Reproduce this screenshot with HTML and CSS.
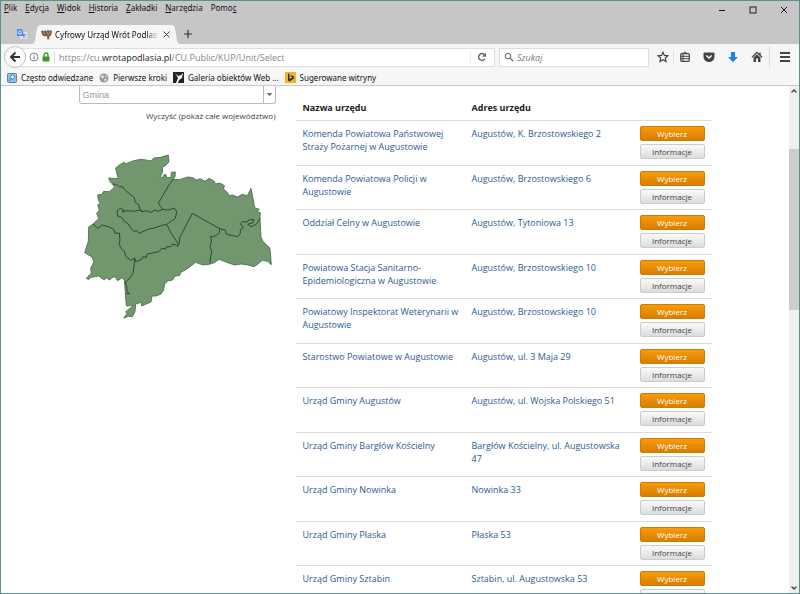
FILE: index.html
```html
<!DOCTYPE html>
<html lang="pl">
<head>
  <meta charset="UTF-8">
  <meta name="viewport" content="width=device-width, initial-scale=1.0">
  <title>Cyfrowy Urząd Wrót Podlasia</title>
  <link rel="stylesheet" href="styles.css">
</head>
<body>
  <div class="window">

    <!-- Title bar -->
    <header class="titlebar">
      <div class="top-row">
        <nav class="menu">
          <button><u>P</u>lik</button>
          <button><u>E</u>dycja</button>
          <button><u>W</u>idok</button>
          <button><u>H</u>istoria</button>
          <button><u>Z</u>akładki</button>
          <button><u>N</u>arzędzia</button>
          <button>Pomo<u>c</u></button>
        </nav>
        <div class="window-controls">
          <button aria-label="Minimalizuj"><svg width="8" height="8" viewBox="0 0 8 8"><path d="M1 4.5h6" stroke="#111" fill="none"/></svg></button>
          <button aria-label="Maksymalizuj"><svg width="8" height="8" viewBox="0 0 8 8"><rect x="1" y="1" width="6" height="6" stroke="#111" fill="none" stroke-width=".9"/></svg></button>
          <button aria-label="Zamknij"><svg width="8" height="8" viewBox="0 0 8 8"><path d="M1 1l6 6M7 1l-6 6" stroke="#111" fill="none"/></svg></button>
        </div>
      </div>
      <div class="tabs">
        <button class="pinned" aria-label="Tłumacz">
          <svg width="12" height="12" viewBox="0 0 12 12"><rect x="4" y="4" width="7" height="7" rx="1" fill="#dfe3ea"/><path d="M6 6.5h4M8 5.5v1M9.5 6.5q-1 2.5-3 3.2M7 7.5l2.5 2.2" stroke="#6c86b5" fill="none" stroke-width=".8"/><path d="M1 1h5l2 7H1z" fill="#4a86e8"/><path d="M5.5 3.7A1.7 1.7 0 1 0 5.6 5.2H4.2" stroke="#fff" fill="none" stroke-width=".9"/></svg>
        </button>
        <div class="tab">
          <svg width="10" height="19" viewBox="0 0 10 19"><path d="M0 19C4 19 4 16 5 9C6 2 7 0 10 0V19z" fill="#f6f6f6"/></svg>
          <div class="tab-body">
            <svg width="11" height="11" viewBox="0 0 11 11"><path d="M0 2l2-.5 1 1L4.500 1l1 1.500L7 .5l1 1.500L10 1l1 1.500-1 4-1.500 1L8 10.500H6.500L6 7.500 4.500 7 3 7.500 1 5.500z" fill="#7d6047"/><path d="M2 4l2 1M6 3l1 2M9 3L7 6" stroke="#b49a7c" stroke-width=".7"/></svg>
            <span class="tab-title">Cyfrowy Urząd Wrót Podlasi</span>
            <button aria-label="Zamknij kartę"><svg width="9" height="9" viewBox="0 0 9 9"><path d="M1.5 1.5l6 6M7.5 1.5l-6 6" stroke="#444" fill="none"/></svg></button>
          </div>
          <svg width="10" height="19" viewBox="0 0 10 19"><path d="M10 19C6 19 6 16 5 9C4 2 3 0 0 0V19z" fill="#f6f6f6"/></svg>
        </div>
        <button class="new-tab" aria-label="Nowa karta"><svg width="10" height="10" viewBox="0 0 10 10"><path d="M5 1v8M1 5h8" stroke="#333" stroke-width="1.2"/></svg></button>
      </div>
    </header>

    <!-- Address bar -->
    <div class="toolbar">
      <button class="back" aria-label="Wstecz"><svg width="12" height="12" viewBox="0 0 12 12"><path d="M6.5 1.500L2 6l4.5 4.500M2.5 6H11" stroke="#333" stroke-width="2" fill="none"/></svg></button>
      <div class="urlbar">
        <svg width="10" height="10" viewBox="0 0 10 10"><circle cx="5" cy="5" r="4" stroke="#777" fill="none" stroke-width=".9"/><path d="M5 4.3v3M5 2.5v1" stroke="#666"/></svg>
        <svg class="lock" width="8" height="10" viewBox="0 0 8 10"><path d="M2 5V3a2 2 0 0 1 4 0v2" stroke="#3c9a1c" stroke-width="1.3" fill="none"/><rect x=".5" y="4.5" width="7" height="5" rx=".8" fill="#3c9a1c"/></svg>
        <div class="url">https://cu.<b>wrotapodlasia.pl</b>/CU.Public/KUP/Unit/Select</div>
        <button class="reload" aria-label="Odśwież"><svg width="10" height="10" viewBox="0 0 10 10"><path d="M8 6.5A3.4 3.4 0 1 1 7.5 2.7" stroke="#666" stroke-width="1.4" fill="none"/><path d="M9 .8v4H5z" fill="#666"/></svg></button>
      </div>
      <label class="search">
        <svg width="10" height="10" viewBox="0 0 10 10"><circle cx="4" cy="4" r="2.7" stroke="#777" stroke-width="1.2" fill="none"/><path d="M6 6l3.2 3.2" stroke="#777" stroke-width="1.5"/></svg>
        <input type="search" placeholder="Szukaj" aria-label="Szukaj">
      </label>
      <div class="tools">
        <button aria-label="Dodaj zakładkę"><svg width="12" height="12" viewBox="0 0 12 12"><path d="M6 1.3l1.4 3.1 3.4.4-2.5 2.3.7 3.4-3-1.7-3 1.7.7-3.4L1.2 4.8l3.400-.4z" stroke="#444" stroke-width="1.2" fill="none"/></svg></button>
        <button class="split" aria-label="Zakładki"><svg width="12" height="12" viewBox="0 0 12 12"><rect x="1.7" y="2.7" width="8.6" height="7.6" rx="1" stroke="#444" stroke-width="1.2" fill="none"/><path d="M4 2.5L6 .8l2 1.7M2 5.3h8M2 7.7h8M4 3v7" stroke="#444" fill="none"/></svg></button>
        <button aria-label="Pocket"><svg width="12" height="12" viewBox="0 0 12 12"><path d="M1.5 1.5h9q1 0 1 1V5.5a5.500 5.500 0 0 1-11 0V2.500q0-1 1-1z" fill="#444"/><path d="M3.3 4.5L6 7.1l2.7-2.6" stroke="#fff" stroke-width="1.4" fill="none"/></svg></button>
        <button aria-label="Pobrane"><svg width="12" height="12" viewBox="0 0 12 12"><path d="M4 1h4v5h3L6 11 1 6h3z" fill="#1a7fe6"/></svg></button>
        <button aria-label="Strona startowa"><svg width="12" height="12" viewBox="0 0 12 12"><path d="M1 6.2L6 1.3l5 4.9M9 1.5v2.5" stroke="#444" stroke-width="1.3" fill="none"/><path d="M2.5 6.5L6 3.2l3.5 3.300V11H7V7.500H5V11H2.500z" fill="#444"/></svg></button>
        <button class="hamburger" aria-label="Menu"><svg width="12" height="12" viewBox="0 0 12 12"><path d="M1 2h10M1 6h10M1 10h10" stroke="#444" stroke-width="1.8"/></svg></button>
      </div>
    </div>

    <!-- Bookmarks -->
    <nav class="bookmarks">
      <a href="#"><svg width="10" height="10" viewBox="0 0 10 10"><rect x=".5" y=".5" width="9" height="9" rx="1" fill="#8fc0df" stroke="#4f87b0"/><circle cx="5.5" cy="4" r="2" fill="#eaf5fc" stroke="#39719b" stroke-width=".8"/><path d="M4 5.5L2 8" stroke="#39719b"/></svg>Często odwiedzane</a>
      <a href="#"><svg width="10" height="10" viewBox="0 0 10 10"><circle cx="5" cy="5" r="4.5" fill="#999"/><path d="M2 3l2-1 1 2-2 2zM6 2l2 1-1 2zM5 6l3 0-2 3z" fill="#e6e6e6"/></svg>Pierwsze kroki</a>
      <a href="#"><svg width="11" height="11" viewBox="0 0 11 11"><rect width="11" height="11" fill="#222"/><path d="M2 1l3 3 3-1 2-2-1 5-3 2-1 3H3l2-5z" fill="#f4f4f4"/></svg>Galeria obiektów Web ...</a>
      <a href="#"><svg width="11" height="11" viewBox="0 0 11 11"><rect width="11" height="11" fill="#f2b71c"/><path d="M3 1.5l1.5.6v5l3-1.7-1.5-.8-.6-1.6L9 4.5v2L4.5 9.5 3 8.5z" fill="#33302a"/></svg>Sugerowane witryny</a>
    </nav>

    <!-- Page -->
    <div class="viewport">
      <main class="page">
        <aside class="filters">
          <select aria-label="Gmina">
            <option>Gmina</option>
          </select>
          <a class="clear" href="#">Wyczyść (pokaż całe województwo)</a>
          <svg class="map" width="190" height="168" viewBox="36 216 570 504" role="img" aria-label="Mapa województwa">
            <g fill="#72976f" stroke="#4c684b" stroke-width="2.5" stroke-linejoin="round">
              <path d="M134 264L146 254 160 247 163 252 185 243 208 238 226 240 240 243 248 234 268 232 292 225 294 246 282 258 274 262 275 276 268 290 276 293 279 284 285 284 287 293 300 293 301 277 313 276 312 291 306 298 325 299 350 291 366 293 376 300 388 296 402 304 414 295 430 304 433 312 447 309 460 317 458 328 469 337 475 347 485 345 500 351 513 343 529 347 540 325 546 355 551 383 565 388 558 394 568 398 567 415 570 470 575 483 597 505 601 554 590 544 574 541 562 551 549 560 530 555 512 552 490 555 470 548 444 538 430 548 415 553 395 555 374 547 357 560 344 569 330 577 325 587 312 588 305 600 290 603 281 612 278 630 270 642 255 648 243 648 240 666 212 678 211 667 194 672 192 695 184 710 172 709 158 714 168 701 164 695 188 676 166 678 160 602 154 593 140 602 132 590 122 593 117 600 105 593 100 600 83 588 60 592 54 598 46 596 50 590 61 580 59 564 69 546 63 531 41 518 52 484 53 441 66 432 83 416 77 400 85 390 80 375 88 370 82 361 80 345 92 343 98 334 115 335 130 322 126 310 118 307 113 294 142 296 137 279z"/>
              <path fill="none" stroke="#203a22" d="M122 312L135 313 145 320 154 320 164 332 178 343 190 353 192 366 204 376 206 386 215 395M306 298L298 310 292 318 262 370 268 379 275 388M138 393L148 385 158 390 154 396 168 392 190 394 204 390 215 395 226 392 240 397 252 390 262 394 275 388 290 390 310 385 317 395 313 415 300 424 287 433 270 437 250 444 230 448 205 460 196 452 188 454 180 445 172 432 160 424 152 412 140 408zM287 433L300 459 322 492 320 500M66 432L80 445 94 435 115 441 130 450 132 460 145 459 147 480 144 492 151 506 160 515 165 530 180 541 191 534 194 545 212 538 216 530 226 532 228 522 240 520 264 515 272 505 284 507 287 500 300 500 305 492 320 497 325 490 326 473 364 400 446 446 445 459 432 468 418 470 422 480 417 500 422 515 416 550M446 446L463 450 466 462 480 466 500 470 508 460 508 449 517 443 508 431 514 425 528 426 535 419 548 419 546 428 530 433 540 440 556 433 567 415M191 534L189 560 186 580 174 597 163 606 167 618 169 635 175 641 164 641"/>
            </g>
          </svg>
        </aside>

        <table class="offices">
          <thead>
            <tr><th class="name">Nazwa urzędu</th><th>Adres urzędu</th><th class="actions" aria-label="Akcje"></th></tr>
          </thead>
          <tbody>
            <tr><td><a href="#">Komenda Powiatowa Państwowej Straży Pożarnej w Augustowie</a></td><td><a href="#">Augustów, K. Brzostowskiego 2</a></td><td class="actions"><button class="btn primary">Wybierz</button><button class="btn">Informacje</button></td></tr>
            <tr><td><a href="#">Komenda Powiatowa Policji w Augustowie</a></td><td><a href="#">Augustów, Brzostowskiego 6</a></td><td class="actions"><button class="btn primary">Wybierz</button><button class="btn">Informacje</button></td></tr>
            <tr><td><a href="#">Oddział Celny w Augustowie</a></td><td><a href="#">Augustów, Tytoniowa 13</a></td><td class="actions"><button class="btn primary">Wybierz</button><button class="btn">Informacje</button></td></tr>
            <tr><td><a href="#">Powiatowa Stacja Sanitarno-Epidemiologiczna w Augustowie</a></td><td><a href="#">Augustów, Brzostowskiego 10</a></td><td class="actions"><button class="btn primary">Wybierz</button><button class="btn">Informacje</button></td></tr>
            <tr><td><a href="#">Powiatowy Inspektorat Weterynarii w Augustowie</a></td><td><a href="#">Augustów, Brzostowskiego 10</a></td><td class="actions"><button class="btn primary">Wybierz</button><button class="btn">Informacje</button></td></tr>
            <tr><td><a href="#">Starostwo Powiatowe w Augustowie</a></td><td><a href="#">Augustów, ul. 3 Maja 29</a></td><td class="actions"><button class="btn primary">Wybierz</button><button class="btn">Informacje</button></td></tr>
            <tr><td><a href="#">Urząd Gminy Augustów</a></td><td><a href="#">Augustów, ul. Wojska Polskiego 51</a></td><td class="actions"><button class="btn primary">Wybierz</button><button class="btn">Informacje</button></td></tr>
            <tr><td><a href="#">Urząd Gminy Bargłów Kościelny</a></td><td><a href="#">Bargłów Kościelny, ul. Augustowska 47</a></td><td class="actions"><button class="btn primary">Wybierz</button><button class="btn">Informacje</button></td></tr>
            <tr><td><a href="#">Urząd Gminy Nowinka</a></td><td><a href="#">Nowinka 33</a></td><td class="actions"><button class="btn primary">Wybierz</button><button class="btn">Informacje</button></td></tr>
            <tr><td><a href="#">Urząd Gminy Płaska</a></td><td><a href="#">Płaska 53</a></td><td class="actions"><button class="btn primary">Wybierz</button><button class="btn">Informacje</button></td></tr>
            <tr><td><a href="#">Urząd Gminy Sztabin</a></td><td><a href="#">Sztabin, ul. Augustowska 53</a></td><td class="actions"><button class="btn primary">Wybierz</button><button class="btn">Informacje</button></td></tr>
          </tbody>
        </table>
      </main>

      <div class="scrollbar">
        <svg width="10" height="10" viewBox="0 0 10 10"><path d="M2.5 6.5L5 4l2.5 2.5" stroke="#444" stroke-width="1.3" fill="none"/></svg>
        <div class="track"><div class="thumb"></div></div>
        <svg width="10" height="10" viewBox="0 0 10 10"><path d="M2.5 3.5L5 6l2.5-2.5" stroke="#444" stroke-width="1.3" fill="none"/></svg>
      </div>
    </div>
  </div>
</body>
</html>
```

FILE: styles.css
```css
* {
  box-sizing: border-box;
}
body {
  margin: 0;
  font-family: "Open Sans", "Noto Sans", sans-serif;
  font-size: 9px;
  color: #333;
}
button {
  padding: 0;
  border: 0;
  background: none;
  font: inherit;
  color: inherit;
}
a {
  color: inherit;
  text-decoration: none;
}
svg {
  display: block;
  flex: none;
}
.window {
  display: flex;
  flex-direction: column;
  height: 100vh;
  border: 1px solid #5b8f90;
  overflow: hidden;
}

/* title bar */
.titlebar {
  background: #c6c6c6;
  color: #111;
  font-family: "Noto Sans", sans-serif;
  font-size: 8px;
}
.top-row {
  display: flex;
  justify-content: space-between;
  height: 23px;
}
.menu {
  display: flex;
  gap: 8px;
  padding-left: 3px;
  height: 13px;
  line-height: 13px;
}
.window-controls {
  display: flex;
  gap: 23px;
  padding: 5px 11px 0 0;
  height: 13px;
}
.tabs {
  display: flex;
  align-items: center;
  height: 20px;
  padding-left: 15px;
}
.tab {
  display: flex;
  align-items: flex-end;
  width: 150px;
  height: 20px;
  margin-left: 3px;
}
.tab-body {
  display: flex;
  flex: 1;
  align-items: center;
  gap: 3px;
  min-width: 0;
  height: 19px;
  background: #f6f6f6;
}
.tab-title {
  flex: 1;
  overflow: hidden;
  white-space: nowrap;
  mask-image: linear-gradient(to right, #000 88%, transparent);
}
.new-tab {
  margin-left: 2px;
}

/* toolbar */
.toolbar {
  display: flex;
  align-items: center;
  height: 26px;
  padding: 0 8px 0 3px;
  background: #f6f6f6;
}
.back {
  z-index: 1;
  display: flex;
  align-items: center;
  justify-content: center;
  width: 22px;
  height: 22px;
  border: 1px solid #c4c4c4;
  border-radius: 50%;
  background: #fbfbfb;
}
.urlbar, .search {
  display: flex;
  align-items: center;
  height: 19px;
  border: 1px solid #ddd;
  background: #fff;
}
.urlbar {
  flex: 1;
  margin-left: -6px;
  padding-left: 8px;
}
.lock {
  margin: 0 4px 0 3px;
}
.url {
  flex: 1;
  padding-left: 4px;
  border-left: 1px solid #ddd;
  line-height: 13px;
  color: #888;
}
.url b {
  font-weight: normal;
  color: #222;
}
.reload {
  padding: 2px 7px 2px 6px;
  border-left: 1px solid #eee;
}
.search {
  width: 150px;
  margin-left: 4px;
  padding-left: 4px;
}
.search input {
  width: 100%;
  padding: 0 0 0 3px;
  border: 0;
  background: none;
  font: italic 9px "Open Sans", sans-serif;
}
.search input::placeholder {
  color: #777;
}
.tools {
  display: flex;
  align-items: center;
  gap: 12px;
  padding-left: 8px;
}
.split {
  margin-left: -8px;
  padding-left: 5px;
  border-left: 1px solid #ddd;
}
.hamburger {
  padding: 5px 0 5px 9px;
  border-left: 1px solid #ddd;
  margin-left: -6px;
}

/* bookmarks */
.bookmarks {
  display: flex;
  gap: 6px;
  height: 16px;
  padding-left: 6px;
  border-bottom: 1px solid #c9c9c9;
  background: #f6f6f6;
  color: #111;
  font-family: "Noto Sans", sans-serif;
  font-size: 8px;
}
.bookmarks a {
  display: flex;
  align-items: center;
  gap: 4px;
}

/* page */
.viewport {
  display: flex;
  flex: 1;
  min-height: 0;
  background: #fff;
}
.page {
  display: flex;
  flex: 1;
  align-items: flex-start;
  justify-content: center;
  gap: 20px;
  overflow: hidden;
}
.filters {
  display: flex;
  flex-direction: column;
  width: 197px;
}
.filters select {
  height: 18px;
  padding: 0 3px;
  border: 1px solid #bbb;
  border-top: 0;
  border-radius: 0 0 3px 3px;
  appearance: none;
  background:
    linear-gradient(#bbb, #bbb) right 11px top / 1px 100% no-repeat,
    conic-gradient(from -40deg at 50% 100%, #777 80deg, transparent 0) right 3px center / 5px 3px no-repeat,
    #fff;
  font: 9px "Liberation Sans", sans-serif;
  color: #999;
}
.clear {
  margin: 5px 0 30px;
  font-size: 8px;
  line-height: 13px;
  text-align: right;
  color: #444;
}
.map {
  margin-left: 4px;
}
.offices {
  width: 416px;
  border-collapse: collapse;
  table-layout: fixed;
  line-height: 13px;
}
.offices th {
  height: 34px;
  padding: 10px 0 0 7px;
  text-align: left;
  color: #222;
}
.offices .name {
  width: 169px;
}
.offices td {
  height: 44px;
  padding: 6px 0 0 7px;
  border-top: 1px solid #ddd;
  vertical-align: top;
  color: #2e5a96;
}
.offices tr:nth-child(odd) td {
  height: 45px;
}
.offices .actions {
  width: 83px;
  padding: 5px 7px 0 11px;
}
.btn {
  display: block;
  width: 65px;
  height: 15px;
  margin-bottom: 3px;
  border: 1px solid #ccc;
  border-radius: 2px;
  background: linear-gradient(#fafafa, #dcdcdc);
  font-size: 8px;
  line-height: 13px;
  color: #444;
}
.btn.primary {
  border-color: #d07c00;
  background: linear-gradient(#f79a0a, #d97e00);
  color: #fff;
}

/* scrollbar */
.scrollbar {
  display: flex;
  flex-direction: column;
  width: 10px;
  background: #f0f0f0;
}
.track {
  flex: 1;
  padding-top: 53px;
}
.thumb {
  height: 37%;
  background: #cdcdcd;
}
```
